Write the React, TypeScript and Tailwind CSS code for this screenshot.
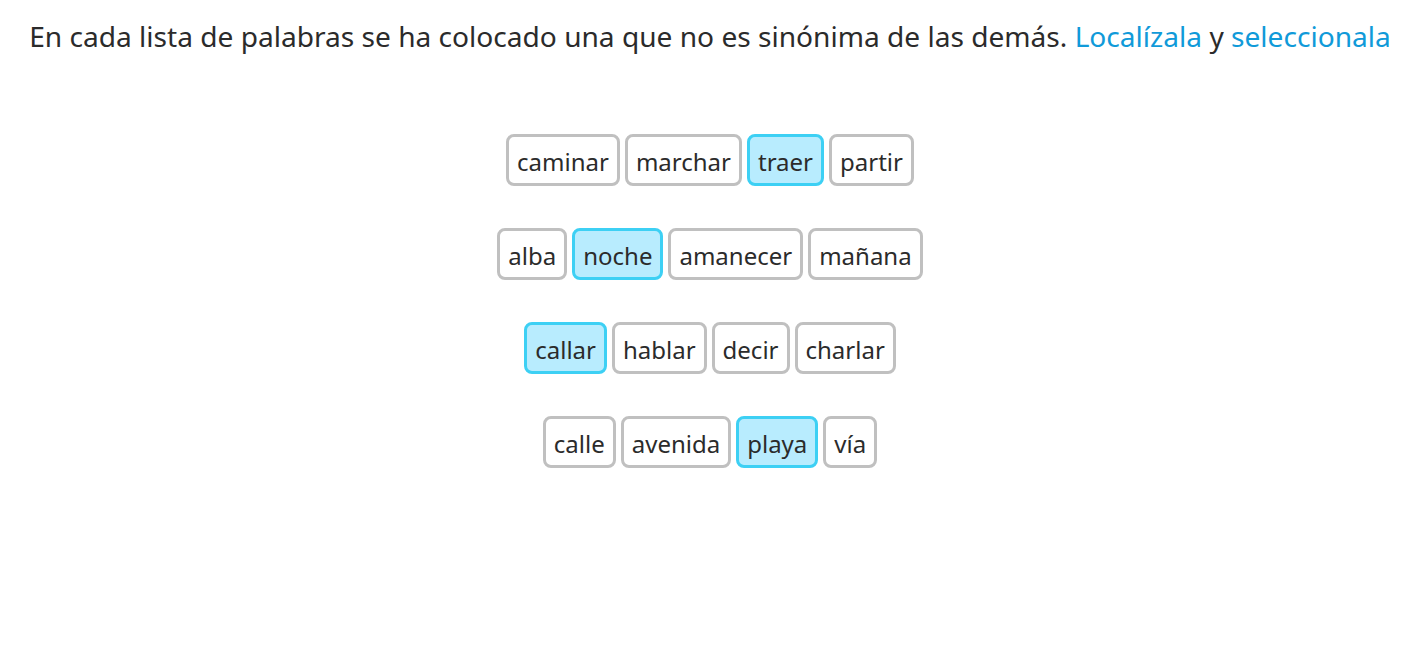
import React from "react";

const rows: { words: string[]; sel: number }[] = [
  { words: ["caminar", "marchar", "traer", "partir"], sel: 2 },
  { words: ["alba", "noche", "amanecer", "mañana"], sel: 1 },
  { words: ["callar", "hablar", "decir", "charlar"], sel: 0 },
  { words: ["calle", "avenida", "playa", "vía"], sel: 2 },
];

export default function App() {
  return (
    <div
      className="w-[1427px] h-[653px] bg-white pr-[7px] text-[#2b2b2b]"
      style={{ fontFamily: '"Noto Sans", "Open Sans", sans-serif' }}
    >
      <div className="pt-[15px] text-center text-[28.1px] leading-[42px]">
        En cada lista de palabras se ha colocado una que no es sinónima de las demás.{" "}
        <span className="text-[#109ad9]">Localízala</span> y{" "}
        <span className="text-[#109ad9]">seleccionala</span>
      </div>
      <div className="mt-[77px] flex flex-col items-center gap-[42px]">
        {rows.map((r, i) => (
          <div key={i} className="flex gap-[5px]">
            {r.words.map((w, j) => (
              <div
                key={j}
                className={
                  j === r.sel
                    ? "h-[52px] px-[8px] pt-[3px] flex items-center rounded-[8px] border-[3px] border-[#3dd0f4] bg-[#b8ecfe] text-[24px]"
                    : "h-[52px] px-[8px] pt-[3px] flex items-center rounded-[8px] border-[3px] border-[#c0c0c0] bg-white text-[24px]"
                }
              >
                {w}
              </div>
            ))}
          </div>
        ))}
      </div>
    </div>
  );
}
